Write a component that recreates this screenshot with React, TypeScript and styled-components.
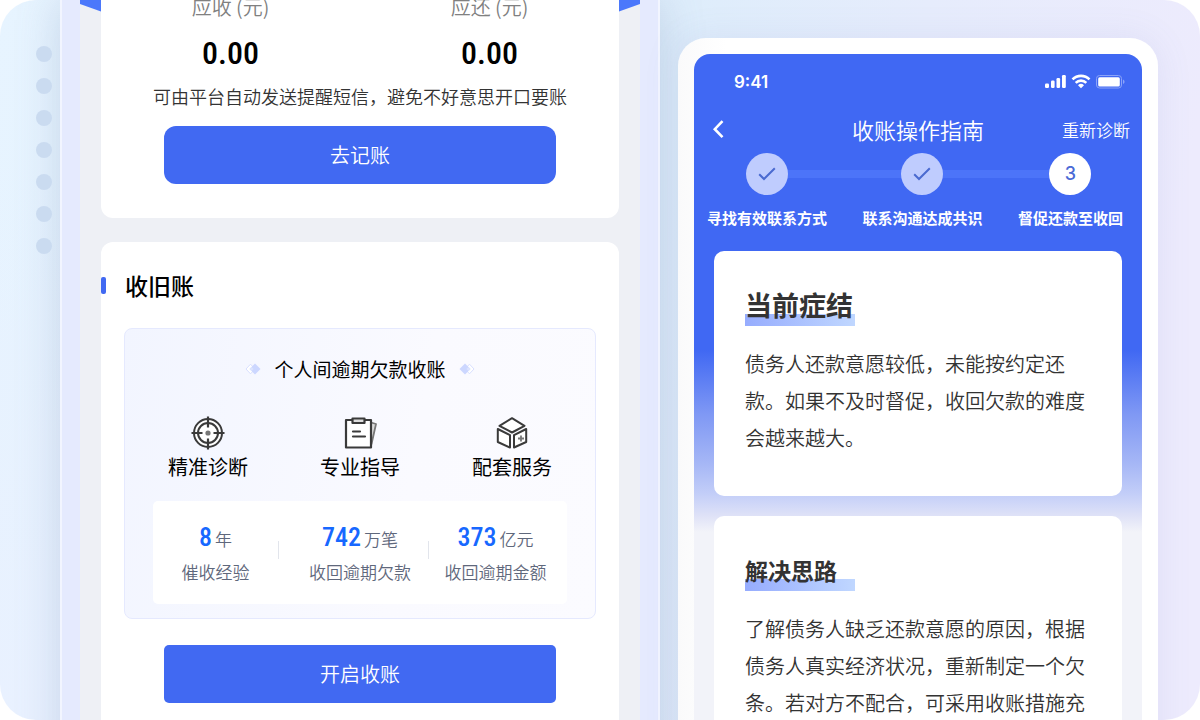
import React from 'react';
import styled, { createGlobalStyle, css } from 'styled-components';

const GlobalStyle = createGlobalStyle`
  * { box-sizing: border-box; }
  body {
    margin: 0;
    background: #fff;
    font-family: 'Noto Sans CJK SC', 'Noto Sans', sans-serif;
    color: #000;
  }
  h1, h2, h3, p, ul, ol, dl, dd { margin: 0; padding: 0; }
  ul, ol { list-style: none; }
  button { border: 0; padding: 0; background: none; font-family: inherit; cursor: pointer; }
  svg { display: block; }
`;

const Stage = styled.div`
  display: grid;
  grid-template-columns: 60px minmax(0, 300fr) minmax(0, 249fr);
  height: 100vh;
  padding-right: 42px;
  overflow: hidden;
  border-radius: 36px;
  background:
    radial-gradient(circle at 0% 100%, #e9f1ff 0, rgba(233, 241, 255, 0) 40%),
    linear-gradient(100deg, #e7f4ff 0%, #deedfb 52%, #e6ecfc 70%, #edebfd 92%);
`;

const DotRail = styled.div`
  display: flex;
  flex-direction: column;
  gap: 16px;
  padding: 46px 0 0 36px;
  z-index: 1;
`;

const Dot = styled.span`
  width: 16px;
  height: 16px;
  border-radius: 50%;
  background: #cadbf0;
`;

/* ---------- Ledger phone ---------- */

const LedgerPhone = styled.section`
  border: solid #f2f5ff;
  border-width: 0 2px;
  padding: 0 18px;
  background: #e5eafe;
  box-shadow: 0 0 40px rgba(110, 135, 175, 0.28);
`;

const LedgerScreen = styled.div`
  position: relative;
  display: flex;
  flex-direction: column;
  gap: 24px;
  min-height: 100vh;
  padding: 0 21px;
  background: #eef0f5;

  &::before {
    content: '';
    position: absolute;
    inset: 0 0 auto;
    height: 12px;
    background: #4b78fb;
    clip-path: polygon(0 0, 100% 0, 100% 4px, 96% 12px, 4% 12px, 0 4px);
  }
`;

const BalanceCard = styled.article`
  position: relative;
  margin-top: -8px;
  padding: 0 0 34px;
  border-radius: 0 0 12px 12px;
  background: #fff;
  text-align: center;
`;

const BalanceRow = styled.dl`
  display: grid;
  grid-template-columns: 1fr 1fr;
`;

const BalanceLabel = styled.dt`
  font-size: 20px;
  line-height: 30px;
  font-weight: 350;
  color: #808080;
`;

const BalanceValue = styled.dd`
  padding-top: 10px;
  font-family: 'Roboto Condensed', Roboto, sans-serif;
  font-size: 32px;
  line-height: 42px;
  font-weight: 500;
`;

const BalanceNote = styled.p`
  padding: 9px 0 17px;
  font-size: 18px;
  line-height: 26px;
  font-weight: 350;
  color: #333;
  white-space: nowrap;
`;

const PrimaryButton = styled.button<{ $radius: number }>`
  display: block;
  width: calc(100% - 126px);
  height: 58px;
  margin: 0 auto;
  padding-bottom: 2px;
  border-radius: ${(p) => p.$radius}px;
  background: #4169f2;
  color: #fff;
  font-size: 20px;
  font-weight: 350;
`;

const CollectCard = styled.article`
  flex: 1;
  border-radius: 12px 12px 0 0;
  background: #fff;
`;

const CollectTitle = styled.h2`
  display: flex;
  align-items: center;
  gap: 19px;
  padding: 26px 0;
  font-size: 23px;
  line-height: 34px;
  font-weight: 500;

  &::before {
    content: '';
    width: 5px;
    height: 17px;
    border-radius: 2px;
    background: #4169f2;
  }
`;

const Panel = styled.div`
  margin: 0 23px 26px;
  padding: 25px 0 14px;
  border: 1px solid #e5e9fe;
  border-radius: 8px;
  background: linear-gradient(100deg, #f2f5ff 0%, #fafaff 60%, #fbfbff 100%);
`;

const PanelTitle = styled.h3`
  display: flex;
  align-items: center;
  justify-content: center;
  gap: 13px;
  font-size: 19px;
  line-height: 30px;
  font-weight: 400;
`;

const FeatureList = styled.ul`
  display: grid;
  grid-template-columns: repeat(3, 1fr);
  padding: 32px 7px 17px;
`;

const Feature = styled.li`
  display: flex;
  flex-direction: column;
  align-items: center;
  font-size: 20px;
  line-height: 34px;
  font-weight: 400;
`;

const StatBox = styled.dl`
  display: grid;
  grid-template-columns: 125fr 150fr 139fr;
  margin: 0 28px;
  padding: 20px 0 15px;
  border-radius: 5px;
  background: #fff;
`;

const Stat = styled.div<{ $divided?: boolean }>`
  position: relative;
  display: flex;
  flex-direction: column-reverse;
  align-items: center;

  ${(p) =>
    p.$divided &&
    css`
      &::before {
        content: '';
        position: absolute;
        left: 0;
        top: 20px;
        width: 1px;
        height: 18px;
        background: #e2e5ec;
      }
    `}

  &:nth-child(2) { padding-left: 14px; }
  &:nth-child(3) { padding-right: 4px; }
`;

const StatLabel = styled.dt`
  font-size: 17px;
  line-height: 34px;
  font-weight: 350;
  color: #5f687c;
  white-space: nowrap;
`;

const StatValue = styled.dd`
  display: flex;
  align-items: baseline;
  gap: 3px;
  font-size: 17px;
  line-height: 33px;
  font-weight: 350;
  color: #5f687c;
`;

const StatNumber = styled.strong`
  font-family: 'Roboto Condensed', Roboto, sans-serif;
  font-size: 26px;
  font-weight: 500;
  color: #1768ff;
`;

/* ---------- Guide phone ---------- */

const GuidePhone = styled.section`
  margin: 38px 0 0 18px;
  padding: 16px 16px 0;
  border-radius: 28px 28px 0 0;
  background: linear-gradient(90deg, #fafafb 0, #fff 10%);
  box-shadow: 0 0 36px rgba(110, 120, 190, 0.1);
`;

const GuideScreen = styled.div`
  min-height: 100vh;
  border-radius: 16px 16px 0 0;
  background: linear-gradient(
    180deg,
    #4068f3 0,
    #4068f3 296px,
    #7f98f4 360px,
    #a6b7f6 410px,
    #c3cef8 440px,
    #dfe2f7 462px,
    #f2f3f9 478px
  );
  color: #fff;
`;

const StatusBar = styled.div`
  display: flex;
  align-items: center;
  justify-content: space-between;
  padding: 16px 17px 0 40px;
  font-family: Inter, sans-serif;
  font-size: 17px;
  line-height: 24px;
  font-weight: 600;
`;

const NavBar = styled.header`
  display: grid;
  grid-template-columns: 1fr auto 1fr;
  align-items: center;
  padding: 18px 12px 3px;
`;

const BackButton = styled.button`
  justify-self: start;
  padding: 0 6px;
  color: #fff;
`;

const NavTitle = styled.h1`
  font-size: 22px;
  line-height: 34px;
  font-weight: 350;
`;

const NavAction = styled.button`
  justify-self: end;
  color: #fff;
  font-size: 17px;
  font-weight: 350;
`;

const StepList = styled.ol`
  position: relative;
  display: flex;
  justify-content: space-between;
  padding: 4px 19px 0 13px;

  &::before {
    content: '';
    position: absolute;
    left: 72px;
    right: 72px;
    top: 21px;
    height: 8px;
    background: #4c74f9;
  }
`;

const Step = styled.li`
  position: relative;
  display: flex;
  flex-direction: column;
  align-items: center;
  gap: 12px;
  font-size: 15px;
  line-height: 22px;
  font-weight: 700;
  white-space: nowrap;
`;

const StepMark = styled.span<{ $current?: boolean }>`
  display: grid;
  place-items: center;
  width: 42px;
  height: 42px;
  border-radius: 50%;
  background: ${(p) => (p.$current ? '#fff' : '#bfccfe')};
  color: #4a6ad6;
  font-family: Inter, sans-serif;
  font-size: 18px;
  font-weight: 500;
`;

const CardStack = styled.div`
  display: flex;
  flex-direction: column;
  gap: 20px;
  padding: 22px 20px 0;
`;

const GuideCard = styled.article`
  padding: 31px 31px 40px;
  border-radius: 10px;
  background: #fff;
  color: #333;
`;

const GuideHeading = styled.h2<{ $size: number }>`
  width: 110px;
  height: 44px;
  font-size: ${(p) => p.$size}px;
  line-height: 46px;
  font-weight: 700;
  white-space: nowrap;
  background: linear-gradient(90deg, #96acfe, #c0d7ff) 0 100% / 100% 12px no-repeat;
`;

const GuideText = styled.p`
  padding-top: 19px;
  font-size: 20px;
  line-height: 37px;
  font-weight: 350;
`;

/* ---------- Drawings ---------- */

const DiamondMark = ({ flip }: { flip?: boolean }) => (
  <svg width="16" height="12" viewBox="0 0 16 12" aria-hidden="true">
    <g transform={flip ? 'matrix(-1 0 0 1 16 0)' : undefined}>
      <path d="M5.500 1.200 1 6l4.500 4.800L10 6z" fill="#fff" stroke="#d9e0ff" strokeLinejoin="round" />
      <path d="M10 .5 15.500 6 10 11.500 4.500 6z" fill="#ccd7ff" />
      <path d="M6.500 4 4.500 6 6.500 8 8.500 6z" fill="#dce4ff" />
    </g>
  </svg>
);

const TargetIcon = () => (
  <svg width="34" height="34" viewBox="0 0 34 34" fill="none" stroke="#3a3a3a" strokeWidth="2" aria-hidden="true">
    <circle cx="17" cy="17" r="14" fill="#fff" />
    <circle cx="17" cy="17" r="10" />
    <path d="M17 .5v11M17 22.500v11M.5 17h11M22.500 17h11" strokeWidth="2.200" />
    <circle cx="17" cy="17" r="2.600" fill="#777" stroke="none" />
  </svg>
);

const ClipboardIcon = () => (
  <svg width="34" height="34" viewBox="0 0 34 34" fill="none" stroke="#3a3a3a" strokeWidth="2.2" strokeLinejoin="round" strokeLinecap="round" aria-hidden="true">
    <path d="M28 6.500 33 8l-4.500 20" fill="#ddd" stroke="#777" strokeWidth="1.800" />
    <path d="M3 4h25v27.500H3z" fill="#fff" />
    <path d="M9.500 2.500h12v4.500h-12z" fill="#ddd" />
    <path d="M10 15.500h7M10 20.500h12" />
  </svg>
);

const BoxIcon = () => (
  <svg width="34" height="34" viewBox="0 0 34 34" fill="#fff" stroke="#3a3a3a" strokeWidth="2" strokeLinejoin="round" aria-hidden="true">
    <path d="M17 2.200 29.500 9.800 17 16.500 4.500 9.800z" />
    <path d="M2.800 13 15 19.200V31.500L2.800 26z" />
    <path d="M31.200 13 19 19.200V31.500L31.200 26z" />
    <path d="M26 19.500v6M23 22.500h6" stroke="#777" strokeWidth="1.800" />
  </svg>
);

const StatusIcons = () => (
  <svg width="80" height="16" viewBox="0 0 80 16" fill="#fff" aria-hidden="true">
    <rect x="0" y="9.500" width="4" height="4.500" rx="1.200" />
    <rect x="6" y="6.500" width="3.600" height="7.500" rx="1.200" />
    <rect x="11.500" y="4" width="3.600" height="10" rx="1.200" />
    <rect x="17" y="1" width="3.800" height="13" rx="1.200" />
    <g fill="none" stroke="#fff" strokeWidth="2.600">
      <path d="M27.500 5.400a12 12 0 0 1 17 0" />
      <path d="M30.700 8.800a7.500 7.500 0 0 1 10.600 0" />
    </g>
    <path d="M33 11.200a4.400 4.400 0 0 1 6 0L36 14.200z" />
    <rect x="51.500" y="1.500" width="25" height="12.500" rx="3" fill="none" stroke="#8ba3f8" />
    <rect x="53.200" y="3.200" width="21.600" height="9.200" rx="1.500" />
    <path d="M78 5.500c2 .8 2 3.700 0 4.500z" fill="#8ba3f8" />
  </svg>
);

const BackIcon = () => (
  <svg width="12" height="20" viewBox="0 0 12 20" fill="none" stroke="#fff" strokeWidth="2.600" aria-hidden="true">
    <path d="M10.500 2.200 2.800 10.200 10.500 18.200" />
  </svg>
);

const CheckIcon = () => (
  <svg width="18" height="14" viewBox="0 0 18 14" fill="none" stroke="#4a6ad0" strokeWidth="2" aria-hidden="true">
    <path d="M1.200 7.200 6 12 16.800 1.200" />
  </svg>
);

/* ---------- Content ---------- */

const balances = [
  { label: '应收 (元)', value: '0.00' },
  { label: '应还 (元)', value: '0.00' },
];

const features = [
  { label: '精准诊断', Icon: TargetIcon },
  { label: '专业指导', Icon: ClipboardIcon },
  { label: '配套服务', Icon: BoxIcon },
];

const stats = [
  { value: '8', unit: '年', label: '催收经验' },
  { value: '742', unit: '万笔', label: '收回逾期欠款' },
  { value: '373', unit: '亿元', label: '收回逾期金额' },
];

const steps = [
  { label: '寻找有效联系方式', done: true },
  { label: '联系沟通达成共识', done: true },
  { label: '督促还款至收回', done: false },
];

const guides = [
  {
    title: '当前症结',
    size: 27,
    text: '债务人还款意愿较低，未能按约定还款。如果不及时督促，收回欠款的难度会越来越大。',
  },
  {
    title: '解决思路',
    size: 23,
    text: '了解债务人缺乏还款意愿的原因，根据债务人真实经济状况，重新制定一个欠条。若对方不配合，可采用收账措施充',
  },
];

export default function App() {
  return (
    <>
      <GlobalStyle />
      <Stage>
        <DotRail aria-hidden="true">
          {Array.from({ length: 7 }, (_, i) => (
            <Dot key={i} />
          ))}
        </DotRail>

        <LedgerPhone>
          <LedgerScreen>
            <BalanceCard>
              <BalanceRow>
                {balances.map((b) => (
                  <div key={b.label}>
                    <BalanceLabel>{b.label}</BalanceLabel>
                    <BalanceValue>{b.value}</BalanceValue>
                  </div>
                ))}
              </BalanceRow>
              <BalanceNote>可由平台自动发送提醒短信，避免不好意思开口要账</BalanceNote>
              <PrimaryButton type="button" $radius={12}>去记账</PrimaryButton>
            </BalanceCard>

            <CollectCard>
              <CollectTitle>收旧账</CollectTitle>
              <Panel>
                <PanelTitle>
                  <DiamondMark />
                  个人间逾期欠款收账
                  <DiamondMark flip />
                </PanelTitle>
                <FeatureList>
                  {features.map(({ label, Icon }) => (
                    <Feature key={label}>
                      <Icon />
                      {label}
                    </Feature>
                  ))}
                </FeatureList>
                <StatBox>
                  {stats.map((s, i) => (
                    <Stat key={s.label} $divided={i > 0}>
                      <StatLabel>{s.label}</StatLabel>
                      <StatValue>
                        <StatNumber>{s.value}</StatNumber>
                        {s.unit}
                      </StatValue>
                    </Stat>
                  ))}
                </StatBox>
              </Panel>
              <PrimaryButton type="button" $radius={5}>开启收账</PrimaryButton>
            </CollectCard>
          </LedgerScreen>
        </LedgerPhone>

        <GuidePhone>
          <GuideScreen>
            <StatusBar>
              <span>9:41</span>
              <StatusIcons />
            </StatusBar>
            <NavBar>
              <BackButton type="button" aria-label="返回">
                <BackIcon />
              </BackButton>
              <NavTitle>收账操作指南</NavTitle>
              <NavAction type="button">重新诊断</NavAction>
            </NavBar>
            <StepList>
              {steps.map((s, i) => (
                <Step key={s.label}>
                  <StepMark $current={!s.done}>{s.done ? <CheckIcon /> : i + 1}</StepMark>
                  {s.label}
                </Step>
              ))}
            </StepList>
            <CardStack>
              {guides.map((g) => (
                <GuideCard key={g.title}>
                  <GuideHeading $size={g.size}>{g.title}</GuideHeading>
                  <GuideText>{g.text}</GuideText>
                </GuideCard>
              ))}
            </CardStack>
          </GuideScreen>
        </GuidePhone>
      </Stage>
    </>
  );
}
